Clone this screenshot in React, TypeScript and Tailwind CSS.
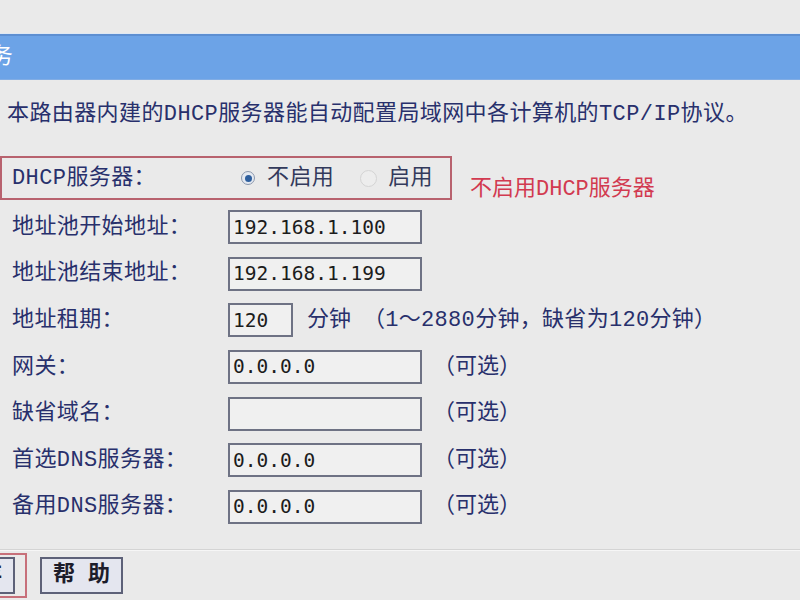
import React from "react";

const FONT = '"Liberation Mono", "Noto Sans CJK SC", monospace';
const VALUE_FONT = '"DejaVu Sans Mono", "Noto Sans CJK SC", monospace';

type Row = {
  label: string;
  value: string;
  narrow?: boolean;
  after?: React.ReactNode;
};

const rows: Row[] = [
  { label: "地址池开始地址：", value: "192.168.1.100" },
  { label: "地址池结束地址：", value: "192.168.1.199" },
  {
    label: "地址租期：",
    value: "120",
    narrow: true,
    after: (
      <div className="flex items-center whitespace-nowrap">
        <span className="ml-[14px]">分钟</span>
        <span className="ml-[12px] tracking-[0.3px]">（1～2880分钟，缺省为120分钟）</span>
      </div>
    ),
  },
  { label: "网关：", value: "0.0.0.0", after: <span className="ml-[11px]">（可选）</span> },
  { label: "缺省域名：", value: "", after: <span className="ml-[11px]">（可选）</span> },
  { label: "首选DNS服务器：", value: "0.0.0.0", after: <span className="ml-[11px]">（可选）</span> },
  { label: "备用DNS服务器：", value: "0.0.0.0", after: <span className="ml-[11px]">（可选）</span> },
];

function Radio({ checked }: { checked: boolean }) {
  return checked ? (
    <span className="flex h-[14px] w-[14px] shrink-0 items-center justify-center rounded-full border border-[#8b98ad] bg-[#e4e9f1]">
      <span className="block h-[7px] w-[7px] rounded-full bg-[#2e5f9e]" />
    </span>
  ) : (
    <span className="block h-[17px] w-[17px] shrink-0 rounded-full border border-[#d4d4d4] bg-[#ededed]" />
  );
}

function TextBox({ value, narrow }: { value: string; narrow?: boolean }) {
  return (
    <div
      className={`flex h-[34px] shrink-0 items-center border-2 border-[#6e7284] bg-[#f0f0f0] pl-[3px] text-[19.5px] leading-none text-[#1c1c1c] ${
        narrow ? "w-[65px]" : "w-[194px]"
      }`}
      style={{ fontFamily: VALUE_FONT }}
    >
      {value}
    </div>
  );
}

export default function App() {
  return (
    <div
      className="flex h-[600px] w-[800px] flex-col overflow-hidden bg-[#eaeaea] text-[22px] text-[#28306c]"
      style={{ fontFamily: FONT }}
    >
      <div className="h-[34px] shrink-0 border-b border-[#dfe8f3]" />

      {/* title bar */}
      <div className="flex h-[46px] shrink-0 items-center border-t-2 border-b border-t-[#5d8fd2] border-b-[#82ade4] bg-[#6ca3e7] text-white">
        <span className="ml-[-84px] whitespace-nowrap leading-none">DHCP服务</span>
      </div>

      <p className="mt-[20px] h-[30px] whitespace-nowrap pl-[7px] leading-[30px] tracking-[0.4px]">
        本路由器内建的DHCP服务器能自动配置局域网中各计算机的TCP/IP协议。
      </p>

      {/* server switch */}
      <div className="mt-[26px] flex h-[44px] w-[452px] items-center border-2 border-[#b8626e] pl-[10px]">
        <span className="w-[216px] shrink-0 whitespace-nowrap tracking-[0.4px]">DHCP服务器：</span>
        <div className="ml-[13px] flex items-center whitespace-nowrap text-[#333a5c]">
          <Radio checked />
          <span className="ml-[12px] tracking-[0.4px]">不启用</span>
          <span className="ml-[26px]">
            <Radio checked={false} />
          </span>
          <span className="ml-[11px] tracking-[0.4px]">启用</span>
        </div>
      </div>

      {/* pool settings */}
      <div className="mt-[4px] flex flex-col">
        {rows.map((r, i) => (
          <div key={i} className="relative flex h-[46.6px] items-center pl-[12px]">
            <span className="w-[216px] shrink-0 whitespace-nowrap tracking-[0.4px]">{r.label}</span>
            <TextBox value={r.value} narrow={r.narrow} />
            {r.after}
            {i === 0 && (
              <span className="absolute left-[470px] top-[-31px] whitespace-nowrap text-[#d23a50]">
                不启用DHCP服务器
              </span>
            )}
          </div>
        ))}
      </div>

      <div className="mt-[19px] h-[2px] shrink-0 border-t border-b border-t-[#d4d4d4] border-b-[#f6f6f6]" />

      {/* actions */}
      <div className="mt-[2px] flex items-center">
        <div className="ml-[-80px] flex h-[45px] items-center border-2 border-[#c7707a] pl-[10px] pr-[10px]">
          <button className="flex h-[37px] w-[83px] items-center justify-center border-2 border-[#5d6178] bg-[#e4e6ef] font-bold text-[#1d1d2b]">
            保 存
          </button>
        </div>
        <button className="ml-[13px] flex h-[37px] w-[83px] items-center justify-center border-2 border-[#5d6178] bg-[#e4e6ef] text-[22px] font-bold text-[#1d1d2b]">
          帮 助
        </button>
      </div>
    </div>
  );
}
